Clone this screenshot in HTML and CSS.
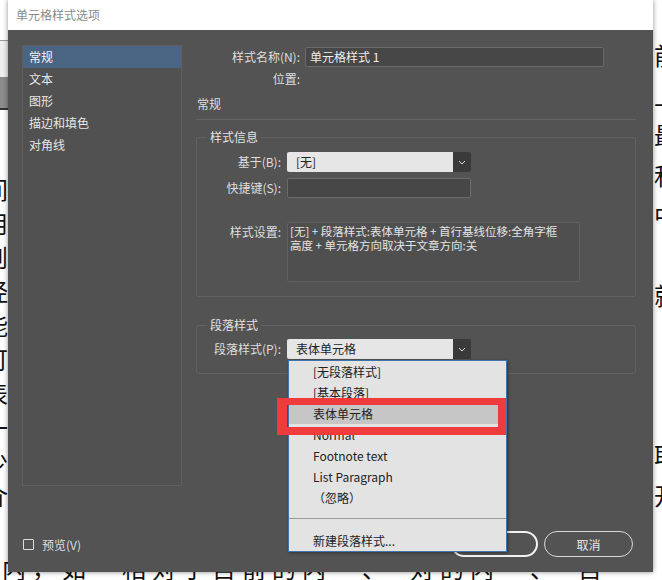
FILE: index.html
```html
<!DOCTYPE html>
<html lang="zh-CN">
<head>
    <meta charset="UTF-8">
    <title>单元格样式选项</title>
    <link rel="stylesheet" href="styles.css">
</head>
<body>
    <!-- document behind the dialog -->
    <div class="page">
        <div class="page-main">
            <div class="strip strip-left">
                <div class="toolbar"></div>
                <div class="chars chars-left">间<br>用<br>则<br>经<br>能<br>可<br>表<br>一<br>少<br>介</div>
            </div>
            <div class="page-center"></div>
            <div class="strip strip-right">
                <div class="chars chars-right">前<br>上<br>最<br>和<br>中<br><br>就<br><br><br><br>取<br>开</div>
            </div>
        </div>
        <div class="page-bottom">内，如　相对于目前的内　、　对的内　、　目</div>
    </div>

    <div class="dialog">
        <div class="titlebar">单元格样式选项</div>
        <div class="dialog-body">
            <div class="content">
                <ul class="sidebar">
                    <li class="active">常规</li>
                    <li>文本</li>
                    <li>图形</li>
                    <li>描边和填色</li>
                    <li>对角线</li>
                </ul>
                <div class="main">
                    <div class="row">
                        <span class="label">样式名称(N):</span>
                        <div class="input input-name">单元格样式 1</div>
                    </div>
                    <div class="row row-pos">
                        <span class="label">位置:</span>
                    </div>
                    <div class="section-title">常规</div>
                    <div class="rule"></div>

                    <fieldset class="group group-info">
                        <legend>样式信息</legend>
                        <div class="field">
                            <span class="label">基于(B):</span>
                            <div class="select">
                                <span class="select-value">[无]</span>
                                <span class="select-btn"><svg width="8" height="5" viewBox="0 0 8 5"><path d="M1 1l3 3 3-3" fill="none" stroke="#d8d8d8" stroke-width="1"/></svg></span>
                            </div>
                        </div>
                        <div class="field field-key">
                            <span class="label">快捷键(S):</span>
                            <div class="input input-key"></div>
                        </div>
                        <div class="field field-settings">
                            <span class="label">样式设置:</span>
                            <div class="settings">[无] + 段落样式:表体单元格 + 首行基线位移:全角字框<br>高度 + 单元格方向取决于文章方向:关</div>
                        </div>
                    </fieldset>

                    <fieldset class="group group-para">
                        <legend>段落样式</legend>
                        <div class="field">
                            <span class="label">段落样式(P):</span>
                            <div class="select">
                                <span class="select-value">表体单元格</span>
                                <span class="select-btn"><svg width="8" height="5" viewBox="0 0 8 5"><path d="M1 1l3 3 3-3" fill="none" stroke="#d8d8d8" stroke-width="1"/></svg></span>
                            </div>
                        </div>
                    </fieldset>
                </div>
            </div>

            <div class="footer">
                <span class="check"></span>
                <span class="check-label">预览(V)</span>
                <div class="buttons">
                    <button class="btn btn-primary">确定</button>
                    <button class="btn">取消</button>
                </div>
            </div>
        </div>

        <!-- open menu of 段落样式 -->
        <div class="dropdown">
            <div class="option">[无段落样式]</div>
            <div class="option">[基本段落]</div>
            <div class="option selected">表体单元格</div>
            <div class="option">Normal</div>
            <div class="option">Footnote text</div>
            <div class="option">List Paragraph</div>
            <div class="option">（忽略）</div>
            <div class="separator"></div>
            <div class="option option-new">新建段落样式...</div>
        </div>
        <div class="callout"></div>
    </div>
</body>
</html>
```

FILE: styles.css
```css
body { margin: 0; width: 662px; height: 580px; overflow: hidden; background: #fff; }

/* page behind */
.page { display: flex; flex-direction: column; height: 580px; font-family: "Noto Sans CJK SC", sans-serif; color: #111; }
.page-main { display: flex; height: 569px; }
.strip { overflow: hidden; }
.strip-left { width: 8px; }
.strip-right { width: 9px; }
.page-center { width: 645px; }
.toolbar { height: 110px; background: linear-gradient(#fff 0 40px, #999 40px 41px, #eee 41px 77px, #8c8c8c 77px 108px, #333 108px 110px); }
.chars { font-size: 24px; line-height: 34px; }
.chars-left { margin-left: -16px; padding-top: 62px; }
.chars-right { margin-left: 1px; padding-top: 35px; line-height: 40px; }
.page-bottom { font-size: 24px; line-height: 24px; white-space: nowrap; letter-spacing: 6px; padding-left: 2px; }

/* dialog */
.dialog { position: absolute; left: 8px; top: 0; width: 645px; height: 572px; background: #535353; box-shadow: 0 0 5px rgba(0, 0, 0, 0.45); font-family: "Noto Sans CJK SC", "Noto Sans", sans-serif; font-size: 12px; color: #dedede; display: flex; flex-direction: column; }
.titlebar { height: 30px; background: #fff; color: #8a8a8a; line-height: 30px; padding-left: 8px; flex-shrink: 0; }
.dialog-body { flex: 1; padding: 15px 17px 0 14px; display: flex; flex-direction: column; }
.content { display: flex; gap: 14px; }

.sidebar { list-style: none; margin: 0; padding: 0; width: 160px; height: 441px; box-sizing: border-box; border: 1px solid #5f5f5f; background: #515151; }
.sidebar li { height: 22px; line-height: 22px; padding-left: 6px; color: #e6e6e6; }
.sidebar li.active { background: #4a6584; color: #f2f2f2; }

.main { width: 440px; }
.row { display: flex; align-items: center; gap: 5px; height: 20px; margin-top: 2px; }
.row .label { width: 104px; text-align: right; line-height: 20px; }
.input { box-sizing: border-box; height: 20px; background: #474747; border: 1px solid #6a6a6a; border-radius: 2px; line-height: 18px; color: #eee; }
.input-name { width: 299px; padding-left: 4px; }
.section-title { margin-top: 5px; line-height: 20px; padding-left: 1px; }
.rule { margin-top: 5px; border-top: 1px solid #636363; }

.group { margin: 9px 0 0; padding: 0; border: 1px solid #626262; border-radius: 3px; }
.group legend { margin-left: 10px; padding: 0 3px; line-height: 16px; color: #e2e2e2; }
.group-info { padding: 7px 0 14px; }
.group-para { margin-top: 20px; padding: 6px 0 14px; }
.field { display: flex; gap: 6px; }
.field .label { width: 84px; text-align: right; line-height: 20px; }
.field-key { margin-top: 6px; }
.field-settings { margin-top: 24px; }
.input-key { width: 184px; }
.settings { box-sizing: border-box; width: 293px; height: 60px; background: #4f4f4f; border: 1px solid #606060; border-radius: 2px; padding: 1px 2px; font-size: 11.5px; line-height: 14px; color: #e4e4e4; }

.select { display: flex; width: 184px; height: 20px; }
.select-value { flex: 1; background: #e6e6e6; color: #222; padding-left: 9px; line-height: 20px; border-radius: 2px 0 0 2px; }
.select-btn { width: 18px; background: #3a3a3a; border-radius: 0 2px 2px 0; display: flex; align-items: center; justify-content: center; }

.footer { margin-top: 45px; display: flex; align-items: center; height: 26px; padding: 0 3px 0 1px; }
.check { width: 9px; height: 9px; border: 1px solid #dcdcdc; border-radius: 1px; }
.check-label { margin-left: 8px; }
.buttons { margin-left: auto; display: flex; gap: 6px; }
.btn { box-sizing: border-box; width: 89px; height: 26px; border-radius: 13px; background: #535353; border: 1px solid #d8d8d8; color: #e8e8e8; font-family: inherit; font-size: 12px; padding: 0; }
.btn-primary { width: 87px; border: 2px solid #f2f2f2; }

/* menu over the dialog */
.dropdown { position: absolute; left: 280px; top: 360px; width: 219px; height: 192px; box-sizing: border-box; border: 1px solid #3f74ad; background: #e3e3e3; color: #222; box-shadow: 1px 1px 3px rgba(0, 0, 0, 0.4); }
.option { height: 21px; line-height: 21px; padding-left: 24px; }
.option.selected { background: #c6c6c6; }
.separator { margin-top: 10px; border-top: 1px solid #9a9a9a; }
.option-new { margin-top: 11px; }
.callout { position: absolute; left: 269px; top: 398px; width: 229px; height: 37px; box-sizing: border-box; border: solid #ef3b3b; border-width: 7px 8px 8px 10px; }
```
